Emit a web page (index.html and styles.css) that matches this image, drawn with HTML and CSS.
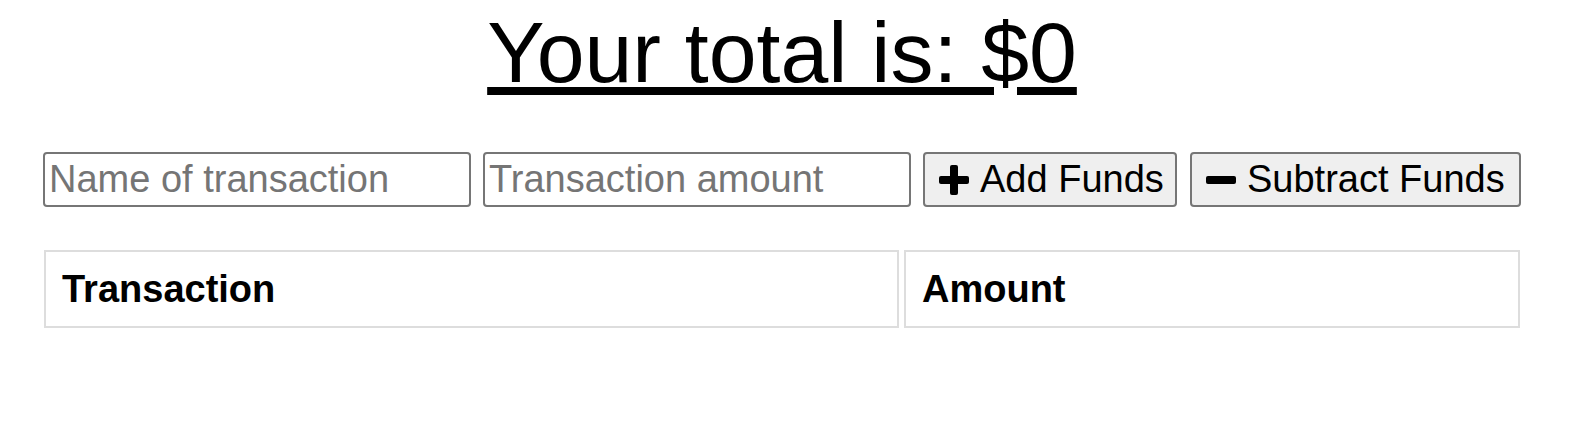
FILE: index.html
```html
<!DOCTYPE html>
<html lang="en">
<head>
<meta charset="utf-8">
<title>Budget</title>
<link rel="stylesheet" href="styles.css">
</head>
<body>
<div class="app">
  <h1 class="total">Your total is: $0</h1>
  <div class="controls">
    <input class="field" type="text" placeholder="Name of transaction">
    <input class="field" type="text" placeholder="Transaction amount">
    <button class="btn btn-add" type="button"><svg class="icon" viewBox="0 0 30 30" aria-hidden="true"><rect x="11" y="0" width="8" height="30" rx="2"/><rect x="0" y="11" width="30" height="8" rx="2"/></svg><span>Add Funds</span></button>
    <button class="btn btn-sub" type="button"><svg class="icon" viewBox="0 0 30 30" aria-hidden="true"><rect x="0" y="11" width="30" height="8" rx="2"/></svg><span>Subtract Funds</span></button>
  </div>
  <table class="ledger">
    <thead>
      <tr>
        <th class="col-name">Transaction</th>
        <th class="col-amount">Amount</th>
      </tr>
    </thead>
    <tbody></tbody>
  </table>
</div>
</body>
</html>
```

FILE: styles.css
```css
html, body {
  margin: 0;
  padding: 0;
  background: #ffffff;
}

body {
  font-family: "Liberation Sans", Arial, sans-serif;
  color: #000000;
}

.app {
  padding: 3px 53px 0 43px;
}

.total {
  margin: 0;
  font-size: 86px;
  font-weight: normal;
  line-height: 99px;
  text-align: center;
  text-decoration: underline;
}

.controls {
  display: flex;
  gap: 12px;
  margin-top: 50px;
  height: 55px;
}

.field {
  box-sizing: border-box;
  width: 428px;
  height: 55px;
  margin: 0;
  padding: 2px 4px;
  border: 2px solid #767676;
  border-radius: 4px;
  font-family: "Liberation Sans", Arial, sans-serif;
  font-size: 38px;
  color: #000000;
  background: #ffffff;
}

.field::placeholder {
  color: #757575;
  opacity: 1;
}

.btn {
  box-sizing: border-box;
  display: flex;
  align-items: center;
  gap: 11px;
  height: 55px;
  margin: 0;
  padding: 2px 13px 2px 14px;
  border: 2px solid #767676;
  border-radius: 4px;
  background: #efefef;
  font-family: "Liberation Sans", Arial, sans-serif;
  font-size: 38px;
  color: #000000;
  white-space: nowrap;
}

.btn-add {
  width: 254px;
}

.btn-sub {
  width: 331px;
  margin-left: 1px;
}

.icon {
  width: 30px;
  height: 30px;
  fill: #000000;
  flex: none;
}

.ledger {
  width: calc(100% + 8px);
  margin: 43px -4px 0 -4px;
  border-collapse: separate;
  border-spacing: 5px 0;
  table-layout: fixed;
}

.ledger th {
  box-sizing: border-box;
  height: 78px;
  padding: 15px 16px;
  border: 2px solid #dddddd;
  font-size: 38px;
  font-weight: bold;
  text-align: left;
  line-height: 44px;
}

.col-name {
  width: 855px;
}
```
